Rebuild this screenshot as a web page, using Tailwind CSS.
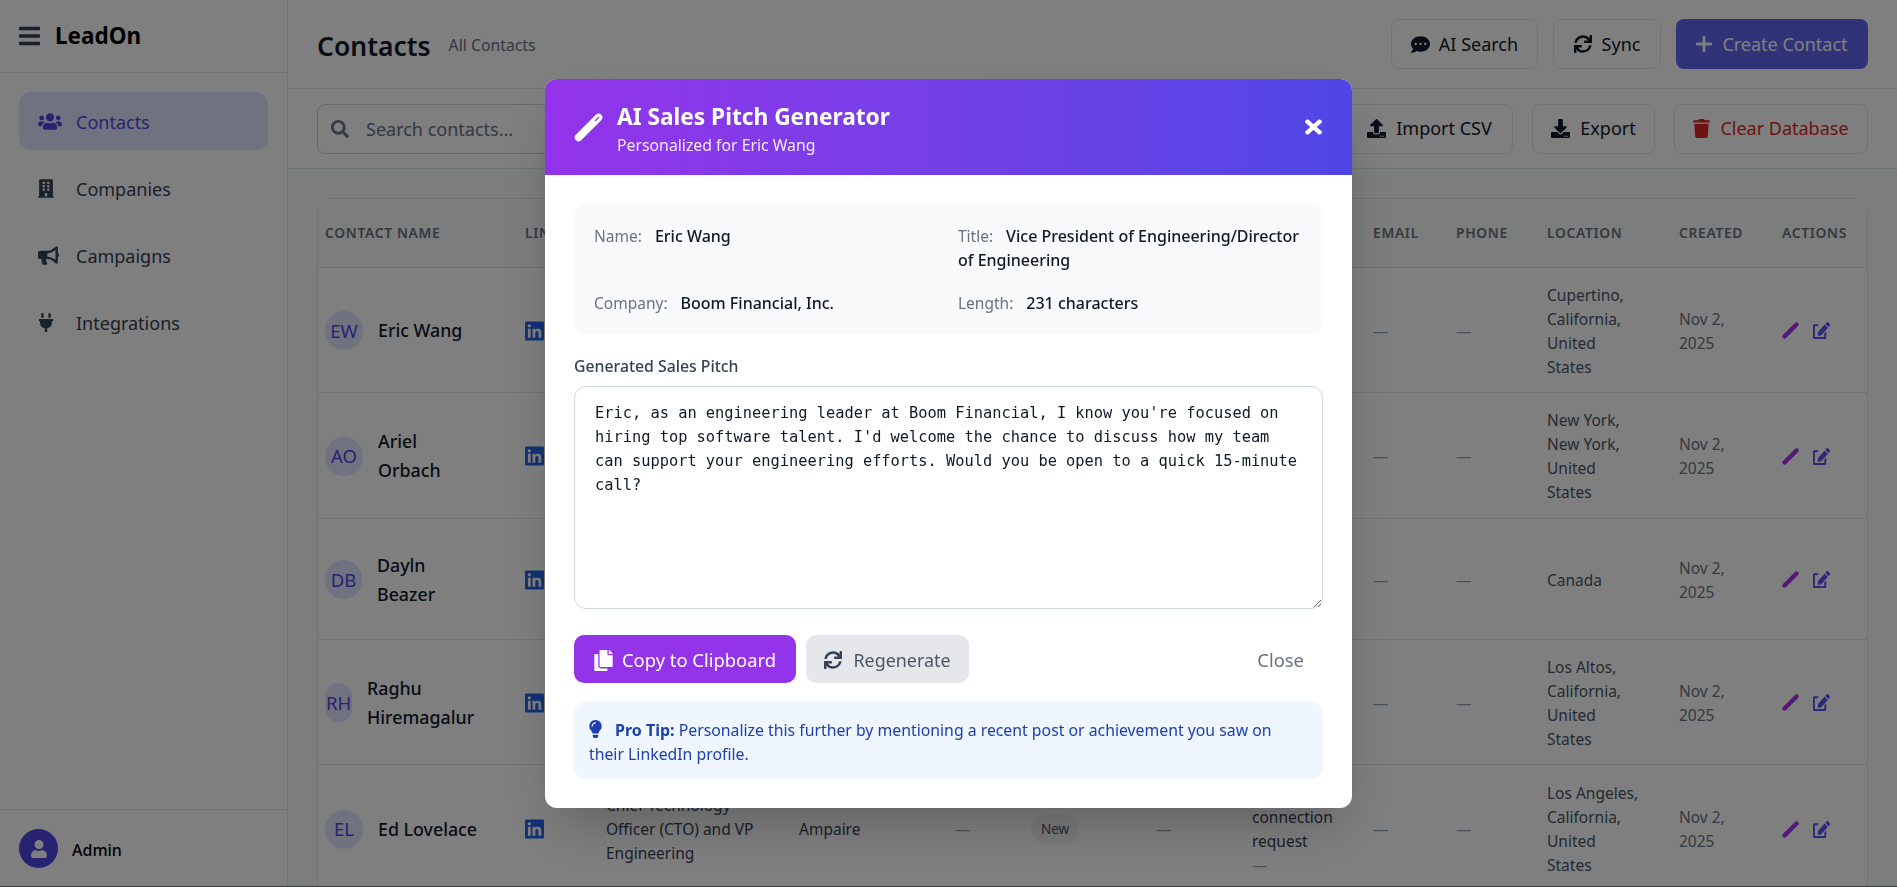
<!doctype html>
<html><head><meta charset="utf-8"><title>LeadOn</title><script src="https://cdn.jsdelivr.net/npm/@tailwindcss/browser@4"></script></head>
<body class="relative h-[887px] overflow-hidden bg-gray-50 font-['Noto_Sans',sans-serif] text-gray-900">
<div class="flex h-[887px]">
  <aside class="flex w-[288px] shrink-0 flex-col border-r border-gray-200 bg-white">
    <div class="flex h-[73px] shrink-0 items-center gap-[15px] border-b border-gray-200 pl-[19px]">
      <svg class="h-[24px] w-[21px] text-gray-700" viewBox="0 0 448 512" fill="currentColor"><path d="M16 132h416c8.837 0 16-7.163 16-16V76c0-8.837-7.163-16-16-16H16C7.163 60 0 67.163 0 76v40c0 8.837 7.163 16 16 16zm0 160h416c8.837 0 16-7.163 16-16v-40c0-8.837-7.163-16-16-16H16c-8.837 0-16 7.163-16 16v40c0 8.837 7.163 16 16 16zm0 160h416c8.837 0 16-7.163 16-16v-40c0-8.837-7.163-16-16-16H16c-8.837 0-16 7.163-16 16v40c0 8.837 7.163 16 16 16z"/></svg>
      <span class="text-[22.5px] font-bold leading-none text-black">LeadOn</span>
    </div>
    <nav class="flex flex-1 flex-col gap-[9px] px-[19px] pt-[19px] text-[18px]">
      <a class="flex h-[58px] items-center rounded-xl bg-[#e0e7ff] pl-[19px] text-[#4f46e5]">
        <span class="flex w-[39px] items-center"><svg class="h-[19px] w-[24px]" viewBox="0 0 640 512" fill="currentColor"><path d="M96 224c35.3 0 64-28.7 64-64s-28.7-64-64-64-64 28.7-64 64 28.7 64 64 64zm448 0c35.3 0 64-28.7 64-64s-28.7-64-64-64-64 28.7-64 64 28.7 64 64 64zm32 32h-64c-17.6 0-33.5 7.1-45.1 18.6 40.3 22.1 68.9 62 75.1 109.4h66c17.7 0 32-14.3 32-32v-32c0-35.3-28.7-64-64-64zm-256 0c61.9 0 112-50.1 112-112S381.9 32 320 32 208 82.1 208 144s50.1 112 112 112zm76.8 32h-8.3c-20.8 10-43.9 16-68.5 16s-47.6-6-68.5-16h-8.3C179.6 288 128 339.6 128 403.2V432c0 26.5 21.5 48 48 48h288c26.5 0 48-21.5 48-48v-28.8c0-63.6-51.6-115.2-115.2-115.2zm-223.7-13.4C161.5 263.1 145.6 256 128 256H64c-35.3 0-64 28.7-64 64v32c0 17.7 14.3 32 32 32h65.9c6.3-47.4 34.9-87.3 75.2-109.4z"/></svg></span><span class="ml-[-1px] pt-[2px]">Contacts</span></a>
      <a class="flex h-[58px] items-center rounded-xl pl-[19px] text-gray-700">
        <span class="flex w-[39px] items-center"><svg class="h-[19px] w-[16px]" viewBox="0 0 448 512" fill="currentColor"><path d="M436 480h-20V24c0-13.255-10.745-24-24-24H56C42.745 0 32 10.745 32 24v456H12c-6.627 0-12 5.373-12 12v20h448v-20c0-6.627-5.373-12-12-12zM128 76c0-6.627 5.373-12 12-12h40c6.627 0 12 5.373 12 12v40c0 6.627-5.373 12-12 12h-40c-6.627 0-12-5.373-12-12V76zm0 96c0-6.627 5.373-12 12-12h40c6.627 0 12 5.373 12 12v40c0 6.627-5.373 12-12 12h-40c-6.627 0-12-5.373-12-12v-40zm52 148h-40c-6.627 0-12-5.373-12-12v-40c0-6.627 5.373-12 12-12h40c6.627 0 12 5.373 12 12v40c0 6.627-5.373 12-12 12zm76 160h-64v-84c0-6.627 5.373-12 12-12h40c6.627 0 12 5.373 12 12v84zm64-172c0 6.627-5.373 12-12 12h-40c-6.627 0-12-5.373-12-12v-40c0-6.627 5.373-12 12-12h40c6.627 0 12 5.373 12 12v40zm0-96c0 6.627-5.373 12-12 12h-40c-6.627 0-12-5.373-12-12v-40c0-6.627 5.373-12 12-12h40c6.627 0 12 5.373 12 12v40zm0-96c0 6.627-5.373 12-12 12h-40c-6.627 0-12-5.373-12-12V76c0-6.627 5.373-12 12-12h40c6.627 0 12 5.373 12 12v40z"/></svg></span><span class="ml-[-1px] pt-[2px]">Companies</span></a>
      <a class="flex h-[58px] items-center rounded-xl pl-[19px] text-gray-700">
        <span class="flex w-[39px] items-center"><svg class="h-[19px] w-[21px]" viewBox="0 0 576 512" fill="currentColor"><path d="M576 240c0-23.63-12.95-44.04-32-55.12V32.01C544 23.26 537.02 0 512 0c-7.12 0-14.19 2.38-19.98 7.02l-85.03 68.03C364.28 109.19 310.66 128 256 128H64c-35.35 0-64 28.65-64 64v96c0 35.35 28.65 64 64 64h33.7c-1.39 10.48-2.18 21.14-2.18 32 0 39.77 9.26 77.35 25.56 110.94 5.19 10.69 16.52 17.06 28.4 17.06h74.28c26.05 0 41.69-29.84 25.9-50.56-16.4-21.52-26.15-48.36-26.15-77.44 0-11.11 1.62-21.79 4.41-32H256c54.66 0 108.28 18.81 150.98 52.95l85.03 68.03a32.023 32.023 0 0 0 19.98 7.02c24.92 0 32-22.78 32-32V295.13C563.05 284.04 576 263.63 576 240zm-96 141.42l-33.05-26.44C392.95 311.78 325.12 288 256 288v-96c69.12 0 136.95-23.78 190.95-66.98L480 98.58v282.84z"/></svg></span><span class="ml-[-1px] pt-[2px]">Campaigns</span></a>
      <a class="flex h-[58px] items-center rounded-xl pl-[19px] text-gray-700">
        <span class="flex w-[39px] items-center"><svg class="h-[19px] w-[16px]" viewBox="0 0 384 512" fill="currentColor"><path d="M320,32a32,32,0,0,0-64,0v96h64Zm48,128H16A16,16,0,0,0,0,176v32a16,16,0,0,0,16,16H32v32A160.07,160.07,0,0,0,160,412.8V512h64V412.8A160.07,160.07,0,0,0,352,256V224h16a16,16,0,0,0,16-16V176A16,16,0,0,0,368,160ZM128,32a32,32,0,0,0-64,0v96h64Z"/></svg></span><span class="ml-[-1px] pt-[2px]">Integrations</span></a>
    </nav>
    <div class="flex h-[78px] shrink-0 items-center gap-[14px] border-t border-gray-200 pl-[19px]">
      <div class="flex h-[39px] w-[39px] items-center justify-center rounded-full bg-[#4f46e5] text-white"><svg class="h-[18px] w-[16px]" viewBox="0 0 448 512" fill="currentColor"><path d="M224 256c70.7 0 128-57.3 128-128S294.7 0 224 0 96 57.3 96 128s57.3 128 128 128zm89.6 32h-16.7c-22.2 10.2-46.9 16-72.9 16s-50.6-5.8-72.9-16h-16.7C60.2 288 0 348.2 0 422.4V464c0 26.5 21.5 48 48 48h352c26.5 0 48-21.5 48-48v-41.6c0-74.2-60.2-134.4-134.4-134.4z"/></svg></div>
      <span class="pt-[2px] text-[16px] font-medium text-black">Admin</span>
    </div>
  </aside>

  <main class="flex min-w-0 flex-1 flex-col overflow-hidden">
    <header class="flex h-[89px] shrink-0 items-center border-b border-gray-200 bg-white px-[29px]">
      <h1 class="pt-[4px] text-[26.5px] font-semibold leading-none">Contacts</h1>
      <span class="ml-[18px] pt-[4px] text-[15.8px] text-gray-500">All Contacts</span>
      <div class="ml-auto flex gap-[15px] text-[18px]">
        <button class="flex h-[50px] w-[147px] items-center justify-center gap-[9px] rounded-lg border border-gray-200 text-gray-900"><svg class="h-[19px] w-[19px]" viewBox="0 0 512 512" fill="currentColor"><path d="M256 32C114.6 32 0 125.1 0 240c0 49.6 21.4 95 57 130.7C44.5 421.1 2.7 466 2.2 466.5c-2.2 2.3-2.8 5.7-1.5 8.7S4.8 480 8 480c66.3 0 116-31.8 140.6-51.4 32.7 12.3 69 19.4 107.4 19.4 141.4 0 256-93.1 256-208S397.4 32 256 32zM128 272c-17.7 0-32-14.3-32-32s14.3-32 32-32 32 14.3 32 32-14.3 32-32 32zm128 0c-17.7 0-32-14.3-32-32s14.3-32 32-32 32 14.3 32 32-14.3 32-32 32zm128 0c-17.7 0-32-14.3-32-32s14.3-32 32-32 32 14.3 32 32-14.3 32-32 32z"/></svg>AI Search</button>
        <button class="flex h-[50px] w-[108px] items-center justify-center gap-[10px] rounded-lg border border-gray-200 text-gray-900"><svg class="h-[18px] w-[18px]" viewBox="0 0 512 512" fill="currentColor"><path d="M440.65 12.57l4 82.77A247.16 247.16 0 0 0 255.83 8C134.73 8 33.91 94.92 12.29 209.82A12 12 0 0 0 24.09 224h49.05a12 12 0 0 0 11.67-9.26 175.91 175.91 0 0 1 317-56.94l-101.46-4.86a12 12 0 0 0-12.57 12v47.41a12 12 0 0 0 12 12H500a12 12 0 0 0 12-12V12a12 12 0 0 0-12-12h-47.37a12 12 0 0 0-11.98 12.57zM255.83 432a175.61 175.61 0 0 1-146-77.8l101.8 4.87a12 12 0 0 0 12.57-12v-47.4a12 12 0 0 0-12-12H12a12 12 0 0 0-12 12V500a12 12 0 0 0 12 12h47.35a12 12 0 0 0 12-12.6l-4.15-82.57A247.17 247.17 0 0 0 255.83 504c121.11 0 221.93-86.92 243.55-201.82a12 12 0 0 0-11.8-14.18h-49.05a12 12 0 0 0-11.67 9.26A175.86 175.86 0 0 1 255.83 432z"/></svg>Sync</button>
        <button class="flex h-[50px] w-[192px] items-center justify-center gap-[10px] rounded-lg bg-[#6366f1] text-white"><svg class="h-[16px] w-[16px]" viewBox="0 0 16 16" fill="currentColor"><rect x="6.6" y="0" width="2.8" height="16" rx="1"/><rect x="0" y="6.6" width="16" height="2.8" rx="1"/></svg>Create Contact</button>
      </div>
    </header>
    <div class="flex h-[80px] shrink-0 items-center border-b border-gray-200 bg-white px-[29px]">
      <div class="relative w-[420px]">
        <svg class="absolute left-[14px] top-[16px] h-[18px] w-[18px] text-gray-500" viewBox="0 0 512 512" fill="currentColor"><path d="M505 442.7L405.3 343c-4.5-4.5-10.6-7-17-7H372c27.6-35.3 44-79.7 44-128C416 93.1 322.9 0 208 0S0 93.1 0 208s93.1 208 208 208c48.3 0 92.7-16.4 128-44v16.3c0 6.4 2.5 12.5 7 17l99.7 99.7c9.4 9.4 24.6 9.4 33.9 0l28.3-28.3c9.4-9.4 9.4-24.6.1-34zM208 336c-70.7 0-128-57.2-128-128 0-70.7 57.2-128 128-128 70.7 0 128 57.2 128 128 0 70.7-57.2 128-128 128z"/></svg>
        <input class="h-[50px] w-full rounded-lg border border-gray-300 pl-[48px] text-[18px] placeholder:text-gray-500" placeholder="Search contacts...">
      </div>
      <div class="ml-auto flex gap-[19px] text-[18px]">
        <button class="flex h-[50px] w-[167px] items-center justify-center gap-[10px] rounded-lg border border-gray-200 text-gray-900"><svg class="h-[19px] w-[19px]" viewBox="0 0 512 512" fill="currentColor"><path d="M296 384h-80c-13.3 0-24-10.7-24-24V192h-87.7c-17.8 0-26.7-21.5-14.1-34.1L242.3 5.7c7.5-7.5 19.8-7.5 27.3 0l152.2 152.2c12.6 12.6 3.7 34.1-14.1 34.1H320v168c0 13.3-10.7 24-24 24zm216-8v112c0 13.3-10.7 24-24 24H24c-13.3 0-24-10.7-24-24V376c0-13.3 10.7-24 24-24h136v8c0 30.9 25.1 56 56 56h80c30.9 0 56-25.1 56-56v-8h136c13.3 0 24 10.7 24 24zm-124 88c0-11-9-20-20-20s-20 9-20 20 9 20 20 20 20-9 20-20zm64 0c0-11-9-20-20-20s-20 9-20 20 9 20 20 20 20-9 20-20z"/></svg>Import CSV</button>
        <button class="flex h-[50px] w-[123px] items-center justify-center gap-[10px] rounded-lg border border-gray-200 text-gray-900"><svg class="h-[19px] w-[19px]" viewBox="0 0 512 512" fill="currentColor"><path d="M216 0h80c13.3 0 24 10.7 24 24v168h87.7c17.8 0 26.7 21.5 14.1 34.1L269.7 378.3c-7.5 7.5-19.8 7.5-27.3 0L90.1 226.1c-12.6-12.6-3.7-34.1 14.1-34.1H192V24c0-13.3 10.7-24 24-24zm296 376v112c0 13.3-10.7 24-24 24H24c-13.3 0-24-10.7-24-24V376c0-13.3 10.7-24 24-24h146.7l49 49c20.1 20.1 52.5 20.1 72.6 0l49-49H488c13.3 0 24 10.7 24 24zm-124 88c0-11-9-20-20-20s-20 9-20 20 9 20 20 20 20-9 20-20zm64 0c0-11-9-20-20-20s-20 9-20 20 9 20 20 20 20-9 20-20z"/></svg>Export</button>
        <button class="flex h-[50px] w-[194px] items-center justify-center gap-[10px] rounded-lg border border-gray-200 text-[#dc2626]"><svg class="h-[19px] w-[17px]" viewBox="0 0 448 512" fill="currentColor"><path d="M432 32H312l-9.4-18.7A24 24 0 0 0 281.1 0H166.8a23.72 23.72 0 0 0-21.4 13.3L136 32H16A16 16 0 0 0 0 48v32a16 16 0 0 0 16 16h416a16 16 0 0 0 16-16V48a16 16 0 0 0-16-16zM53.2 467a48 48 0 0 0 47.9 45h245.8a48 48 0 0 0 47.9-45L416 128H32z"/></svg>Clear Database</button>
      </div>
    </div>
    <div class="px-[29px] pt-[29px]">
      <div class="rounded-xl border border-gray-200 bg-white">
        <table class="w-full table-fixed border-collapse text-left text-[15.5px] leading-[24px] text-gray-600 [&_td]:pt-[2px]">
          <colgroup><col class="w-[199px]"><col class="w-[81px]"><col class="w-[193px]"><col class="w-[156px]"><col class="w-[76px]"><col class="w-[125px]"><col class="w-[96px]"><col class="w-[121px]"><col class="w-[83px]"><col class="w-[91px]"><col class="w-[132px]"><col class="w-[103px]"><col class="w-[93px]"></colgroup>
          <thead class="bg-gray-50 text-[13.8px] uppercase tracking-[0.05em] text-gray-500">
            <tr class="h-[68px] border-b border-gray-200">
              <th class="pl-[7px] font-semibold">Contact Name</th><th class="pl-2 font-semibold">LinkedIn</th><th></th><th></th><th></th><th></th><th></th><th></th>
              <th class="pl-2 font-semibold">Email</th><th class="pl-2 font-semibold">Phone</th><th class="pl-2 font-semibold">Location</th><th class="pl-2 font-semibold">Created</th><th class="pl-2 font-semibold">Actions</th>
            </tr>
          </thead>
          <tbody>
            <tr class="h-[125px] border-b border-gray-200">
              <td class="pl-[7px]"><div class="flex items-center gap-[15px]"><span class="flex h-[39px] w-[38px] shrink-0 items-center justify-center rounded-full bg-[#e0e7ff] text-[18.5px] text-[#4f46e5]">EW</span><span class="text-[17.8px] font-medium leading-[29px] text-gray-900">Eric Wang</span></div></td>
              <td class="pl-2"><svg class="h-[22px] w-[19px] text-[#2563eb]" viewBox="0 0 448 512" fill="currentColor"><path d="M416 32H31.9C14.3 32 0 46.5 0 64.3v383.4C0 465.5 14.3 480 31.9 480H416c17.6 0 32-14.5 32-32.3V64.3c0-17.8-14.4-32.3-32-32.3zM135.4 416H69V202.2h66.5V416zm-33.2-243c-21.3 0-38.5-17.3-38.5-38.5S80.9 96 102.2 96c21.2 0 38.5 17.3 38.5 38.5 0 21.3-17.2 38.5-38.5 38.5zm282.1 243h-66.4V312c0-24.8-.5-56.7-34.5-56.7-34.6 0-39.9 27-39.9 54.9V416h-66.4V202.2h63.7v29.2h.9c8.9-16.8 30.6-27.3 63-27.3 67.2 0 79.7 44.3 79.7 101.9V416z"/></svg></td>
              <td></td><td></td><td></td><td></td><td></td><td></td>
              <td class="pl-2 text-gray-400">—</td><td class="pl-2 text-gray-400">—</td>
              <td class="pl-2">Cupertino,<br>California,<br>United<br>States</td><td class="pl-2 text-gray-500">Nov 2,<br>2025</td>
              <td class="pl-2"><div class="flex gap-[14px]"><svg class="h-[17px] w-[17px] text-[#a833f0]" viewBox="0 0 17 17"><path d="M2.5 14.5 14.5 2.5" stroke="currentColor" stroke-width="4.4" stroke-linecap="round"/></svg><svg class="h-[17px] w-[17px] text-[#5b50f0]" viewBox="0 0 576 512" preserveAspectRatio="none" fill="currentColor"><path d="M402.6 83.2l90.2 90.2c3.8 3.8 3.8 10 0 13.8L274.4 405.6l-92.8 10.3c-12.4 1.4-22.9-9.1-21.5-21.5l10.3-92.8L388.8 83.2c3.8-3.8 10-3.8 13.8 0zm162-22.9l-48.8-48.8c-15.2-15.2-39.9-15.2-55.2 0l-35.4 35.4c-3.8 3.8-3.8 10 0 13.8l90.2 90.2c3.8 3.8 10 3.8 13.8 0l35.4-35.4c15.2-15.3 15.2-40 0-55.2zM384 346.2V448H64V128h73.1c3.2 0 6.2-1.3 8.5-3.5l40-40c7.6-7.6 2.2-20.5-8.5-20.5H48C21.5 64 0 85.5 0 112v352c0 26.5 21.5 48 48 48h352c26.5 0 48-21.5 48-48V306.2c0-10.7-12.9-16-20.5-8.5l-40 40c-2.2 2.3-3.5 5.3-3.5 8.5z"/></svg></div></td>
            </tr>
            <tr class="h-[126px] border-b border-gray-200">
              <td class="pl-[7px]"><div class="flex items-center gap-[15px]"><span class="flex h-[39px] w-[38px] shrink-0 items-center justify-center rounded-full bg-[#e0e7ff] text-[18.5px] text-[#4f46e5]">AO</span><span class="text-[17.8px] font-medium leading-[29px] text-gray-900">Ariel<br>Orbach</span></div></td>
              <td class="pl-2"><svg class="h-[22px] w-[19px] text-[#2563eb]" viewBox="0 0 448 512" fill="currentColor"><path d="M416 32H31.9C14.3 32 0 46.5 0 64.3v383.4C0 465.5 14.3 480 31.9 480H416c17.6 0 32-14.5 32-32.3V64.3c0-17.8-14.4-32.3-32-32.3zM135.4 416H69V202.2h66.5V416zm-33.2-243c-21.3 0-38.5-17.3-38.5-38.5S80.9 96 102.2 96c21.2 0 38.5 17.3 38.5 38.5 0 21.3-17.2 38.5-38.5 38.5zm282.1 243h-66.4V312c0-24.8-.5-56.7-34.5-56.7-34.6 0-39.9 27-39.9 54.9V416h-66.4V202.2h63.7v29.2h.9c8.9-16.8 30.6-27.3 63-27.3 67.2 0 79.7 44.3 79.7 101.9V416z"/></svg></td>
              <td></td><td></td><td></td><td></td><td></td><td></td>
              <td class="pl-2 text-gray-400">—</td><td class="pl-2 text-gray-400">—</td>
              <td class="pl-2">New York,<br>New York,<br>United<br>States</td><td class="pl-2 text-gray-500">Nov 2,<br>2025</td>
              <td class="pl-2"><div class="flex gap-[14px]"><svg class="h-[17px] w-[17px] text-[#a833f0]" viewBox="0 0 17 17"><path d="M2.5 14.5 14.5 2.5" stroke="currentColor" stroke-width="4.4" stroke-linecap="round"/></svg><svg class="h-[17px] w-[17px] text-[#5b50f0]" viewBox="0 0 576 512" preserveAspectRatio="none" fill="currentColor"><path d="M402.6 83.2l90.2 90.2c3.8 3.8 3.8 10 0 13.8L274.4 405.6l-92.8 10.3c-12.4 1.4-22.9-9.1-21.5-21.5l10.3-92.8L388.8 83.2c3.8-3.8 10-3.8 13.8 0zm162-22.9l-48.8-48.8c-15.2-15.2-39.9-15.2-55.2 0l-35.4 35.4c-3.8 3.8-3.8 10 0 13.8l90.2 90.2c3.8 3.8 10 3.8 13.8 0l35.4-35.4c15.2-15.3 15.2-40 0-55.2zM384 346.2V448H64V128h73.1c3.2 0 6.2-1.3 8.5-3.5l40-40c7.6-7.6 2.2-20.5-8.5-20.5H48C21.5 64 0 85.5 0 112v352c0 26.5 21.5 48 48 48h352c26.5 0 48-21.5 48-48V306.2c0-10.7-12.9-16-20.5-8.5l-40 40c-2.2 2.3-3.5 5.3-3.5 8.5z"/></svg></div></td>
            </tr>
            <tr class="h-[121px] border-b border-gray-200">
              <td class="pl-[7px]"><div class="flex items-center gap-[15px]"><span class="flex h-[39px] w-[37px] shrink-0 items-center justify-center rounded-full bg-[#e0e7ff] text-[18.5px] text-[#4f46e5]">DB</span><span class="text-[17.8px] font-medium leading-[29px] text-gray-900">Dayln<br>Beazer</span></div></td>
              <td class="pl-2"><svg class="h-[22px] w-[19px] text-[#2563eb]" viewBox="0 0 448 512" fill="currentColor"><path d="M416 32H31.9C14.3 32 0 46.5 0 64.3v383.4C0 465.5 14.3 480 31.9 480H416c17.6 0 32-14.5 32-32.3V64.3c0-17.8-14.4-32.3-32-32.3zM135.4 416H69V202.2h66.5V416zm-33.2-243c-21.3 0-38.5-17.3-38.5-38.5S80.9 96 102.2 96c21.2 0 38.5 17.3 38.5 38.5 0 21.3-17.2 38.5-38.5 38.5zm282.1 243h-66.4V312c0-24.8-.5-56.7-34.5-56.7-34.6 0-39.9 27-39.9 54.9V416h-66.4V202.2h63.7v29.2h.9c8.9-16.8 30.6-27.3 63-27.3 67.2 0 79.7 44.3 79.7 101.9V416z"/></svg></td>
              <td></td><td></td><td></td><td></td><td></td><td></td>
              <td class="pl-2 text-gray-400">—</td><td class="pl-2 text-gray-400">—</td>
              <td class="pl-2">Canada</td><td class="pl-2 text-gray-500">Nov 2,<br>2025</td>
              <td class="pl-2"><div class="flex gap-[14px]"><svg class="h-[17px] w-[17px] text-[#a833f0]" viewBox="0 0 17 17"><path d="M2.5 14.5 14.5 2.5" stroke="currentColor" stroke-width="4.4" stroke-linecap="round"/></svg><svg class="h-[17px] w-[17px] text-[#5b50f0]" viewBox="0 0 576 512" preserveAspectRatio="none" fill="currentColor"><path d="M402.6 83.2l90.2 90.2c3.8 3.8 3.8 10 0 13.8L274.4 405.6l-92.8 10.3c-12.4 1.4-22.9-9.1-21.5-21.5l10.3-92.8L388.8 83.2c3.8-3.8 10-3.8 13.8 0zm162-22.9l-48.8-48.8c-15.2-15.2-39.9-15.2-55.2 0l-35.4 35.4c-3.8 3.8-3.8 10 0 13.8l90.2 90.2c3.8 3.8 10 3.8 13.8 0l35.4-35.4c15.2-15.3 15.2-40 0-55.2zM384 346.2V448H64V128h73.1c3.2 0 6.2-1.3 8.5-3.5l40-40c7.6-7.6 2.2-20.5-8.5-20.5H48C21.5 64 0 85.5 0 112v352c0 26.5 21.5 48 48 48h352c26.5 0 48-21.5 48-48V306.2c0-10.7-12.9-16-20.5-8.5l-40 40c-2.2 2.3-3.5 5.3-3.5 8.5z"/></svg></div></td>
            </tr>
            <tr class="h-[125px] border-b border-gray-200">
              <td class="pl-[7px]"><div class="flex items-center gap-[15px]"><span class="flex h-[39px] w-[27px] shrink-0 items-center justify-center rounded-full bg-[#e0e7ff] text-[18.5px] text-[#4f46e5]">RH</span><span class="text-[17.8px] font-medium leading-[29px] text-gray-900">Raghu<br>Hiremagalur</span></div></td>
              <td class="pl-2"><svg class="h-[22px] w-[19px] text-[#2563eb]" viewBox="0 0 448 512" fill="currentColor"><path d="M416 32H31.9C14.3 32 0 46.5 0 64.3v383.4C0 465.5 14.3 480 31.9 480H416c17.6 0 32-14.5 32-32.3V64.3c0-17.8-14.4-32.3-32-32.3zM135.4 416H69V202.2h66.5V416zm-33.2-243c-21.3 0-38.5-17.3-38.5-38.5S80.9 96 102.2 96c21.2 0 38.5 17.3 38.5 38.5 0 21.3-17.2 38.5-38.5 38.5zm282.1 243h-66.4V312c0-24.8-.5-56.7-34.5-56.7-34.6 0-39.9 27-39.9 54.9V416h-66.4V202.2h63.7v29.2h.9c8.9-16.8 30.6-27.3 63-27.3 67.2 0 79.7 44.3 79.7 101.9V416z"/></svg></td>
              <td></td><td></td><td></td><td></td><td></td><td></td>
              <td class="pl-2 text-gray-400">—</td><td class="pl-2 text-gray-400">—</td>
              <td class="pl-2">Los Altos,<br>California,<br>United<br>States</td><td class="pl-2 text-gray-500">Nov 2,<br>2025</td>
              <td class="pl-2"><div class="flex gap-[14px]"><svg class="h-[17px] w-[17px] text-[#a833f0]" viewBox="0 0 17 17"><path d="M2.5 14.5 14.5 2.5" stroke="currentColor" stroke-width="4.4" stroke-linecap="round"/></svg><svg class="h-[17px] w-[17px] text-[#5b50f0]" viewBox="0 0 576 512" preserveAspectRatio="none" fill="currentColor"><path d="M402.6 83.2l90.2 90.2c3.8 3.8 3.8 10 0 13.8L274.4 405.6l-92.8 10.3c-12.4 1.4-22.9-9.1-21.5-21.5l10.3-92.8L388.8 83.2c3.8-3.8 10-3.8 13.8 0zm162-22.9l-48.8-48.8c-15.2-15.2-39.9-15.2-55.2 0l-35.4 35.4c-3.8 3.8-3.8 10 0 13.8l90.2 90.2c3.8 3.8 10 3.8 13.8 0l35.4-35.4c15.2-15.3 15.2-40 0-55.2zM384 346.2V448H64V128h73.1c3.2 0 6.2-1.3 8.5-3.5l40-40c7.6-7.6 2.2-20.5-8.5-20.5H48C21.5 64 0 85.5 0 112v352c0 26.5 21.5 48 48 48h352c26.5 0 48-21.5 48-48V306.2c0-10.7-12.9-16-20.5-8.5l-40 40c-2.2 2.3-3.5 5.3-3.5 8.5z"/></svg></div></td>
            </tr>
            <tr class="h-[128px]">
              <td class="pl-[7px]"><div class="flex items-center gap-[15px]"><span class="flex h-[39px] w-[38px] shrink-0 items-center justify-center rounded-full bg-[#e0e7ff] text-[18.5px] text-[#4f46e5]">EL</span><span class="text-[17.8px] font-medium leading-[29px] text-gray-900">Ed Lovelace</span></div></td>
              <td class="pl-2"><svg class="h-[22px] w-[19px] text-[#2563eb]" viewBox="0 0 448 512" fill="currentColor"><path d="M416 32H31.9C14.3 32 0 46.5 0 64.3v383.4C0 465.5 14.3 480 31.9 480H416c17.6 0 32-14.5 32-32.3V64.3c0-17.8-14.4-32.3-32-32.3zM135.4 416H69V202.2h66.5V416zm-33.2-243c-21.3 0-38.5-17.3-38.5-38.5S80.9 96 102.2 96c21.2 0 38.5 17.3 38.5 38.5 0 21.3-17.2 38.5-38.5 38.5zm282.1 243h-66.4V312c0-24.8-.5-56.7-34.5-56.7-34.6 0-39.9 27-39.9 54.9V416h-66.4V202.2h63.7v29.2h.9c8.9-16.8 30.6-27.3 63-27.3 67.2 0 79.7 44.3 79.7 101.9V416z"/></svg></td>
              <td class="pl-2 text-gray-700">Chief Technology<br>Officer (CTO) and VP<br>Engineering</td>
              <td class="pl-2 text-gray-700">Ampaire</td>
              <td class="pl-2 text-gray-400">—</td>
              <td class="pl-2"><span class="inline-flex h-[30px] w-[48px] items-center justify-center rounded-full bg-gray-100 text-[13.5px] text-gray-600">New</span></td>
              <td class="pl-2 text-gray-400">—</td>
              <td class="pl-2 text-gray-700">Sent<br>connection<br>request<br><span class="text-gray-400">—</span></td>
              <td class="pl-2 text-gray-400">—</td><td class="pl-2 text-gray-400">—</td>
              <td class="pl-2">Los Angeles,<br>California,<br>United<br>States</td><td class="pl-2 text-gray-500">Nov 2,<br>2025</td>
              <td class="pl-2"><div class="flex gap-[14px]"><svg class="h-[17px] w-[17px] text-[#a833f0]" viewBox="0 0 17 17"><path d="M2.5 14.5 14.5 2.5" stroke="currentColor" stroke-width="4.4" stroke-linecap="round"/></svg><svg class="h-[17px] w-[17px] text-[#5b50f0]" viewBox="0 0 576 512" preserveAspectRatio="none" fill="currentColor"><path d="M402.6 83.2l90.2 90.2c3.8 3.8 3.8 10 0 13.8L274.4 405.6l-92.8 10.3c-12.4 1.4-22.9-9.1-21.5-21.5l10.3-92.8L388.8 83.2c3.8-3.8 10-3.8 13.8 0zm162-22.9l-48.8-48.8c-15.2-15.2-39.9-15.2-55.2 0l-35.4 35.4c-3.8 3.8-3.8 10 0 13.8l90.2 90.2c3.8 3.8 10 3.8 13.8 0l35.4-35.4c15.2-15.3 15.2-40 0-55.2zM384 346.2V448H64V128h73.1c3.2 0 6.2-1.3 8.5-3.5l40-40c7.6-7.6 2.2-20.5-8.5-20.5H48C21.5 64 0 85.5 0 112v352c0 26.5 21.5 48 48 48h352c26.5 0 48-21.5 48-48V306.2c0-10.7-12.9-16-20.5-8.5l-40 40c-2.2 2.3-3.5 5.3-3.5 8.5z"/></svg></div></td>
            </tr>
          </tbody>
        </table>
      </div>
    </div>
  </main>
</div>

<div class="fixed inset-0 flex items-center justify-center bg-black/50">
  <div class="w-[807px] overflow-hidden rounded-xl bg-white shadow-2xl">
    <div class="flex h-[96px] items-center bg-gradient-to-r from-[#9333ea] to-[#4f46e5] pl-[29px] pr-[30px] text-white">
      <svg class="h-[29px] w-[29px] shrink-0" viewBox="0 0 29 29"><path d="M4.5 24.5 24.5 4.5" stroke="currentColor" stroke-width="7.5" stroke-linecap="round"/><path d="M21 8 25 4" stroke="#8a38e9" stroke-width="1.2"/></svg>
      <div class="ml-[14px] pt-[5px]">
        <h2 class="text-[22.7px] font-bold leading-[30px]">AI Sales Pitch Generator</h2>
        <p class="text-[15.8px] leading-[26px] text-[#f3e8ff]">Personalized for Eric Wang</p>
      </div>
      <svg class="ml-auto h-[22px] w-[17px] shrink-0" viewBox="0 0 352 512" fill="currentColor" preserveAspectRatio="none"><path d="M242.72 256l100.07-100.07c12.28-12.28 12.28-32.19 0-44.48l-22.24-22.24c-12.28-12.28-32.19-12.28-44.48 0L176 189.28 75.93 89.21c-12.28-12.28-32.19-12.28-44.48 0L9.21 111.45c-12.28 12.28-12.28 32.19 0 44.48L109.28 256 9.21 356.07c-12.28 12.28-12.28 32.19 0 44.48l22.24 22.24c12.28 12.28 32.2 12.28 44.48 0L176 322.72l100.07 100.07c12.28 12.28 32.2 12.28 44.48 0l22.24-22.24c12.28-12.28 12.28-32.19 0-44.48L242.72 256z"/></svg>
    </div>
    <div class="p-[29px]">
      <div class="grid grid-cols-[364px_1fr] gap-y-[19px] rounded-xl bg-gray-50 px-[20px] pb-[19px] pt-[20px] text-[15.5px] leading-[24px]">
        <div><span class="mr-[13px] text-gray-500">Name:</span><span class="text-[16px] font-medium text-gray-900">Eric Wang</span></div>
        <div><span class="mr-[13px] text-gray-500">Title:</span><span class="text-[16px] font-medium text-gray-900">Vice President of Engineering/Director<br>of Engineering</span></div>
        <div><span class="mr-[13px] text-gray-500">Company:</span><span class="text-[16px] font-medium text-gray-900">Boom Financial, Inc.</span></div>
        <div><span class="mr-[13px] text-gray-500">Length:</span><span class="text-[16px] font-medium text-gray-900">231 characters</span></div>
      </div>
      <label class="mt-[20px] block text-[15.8px] font-medium leading-[24px] text-gray-700">Generated Sales Pitch</label>
      <textarea class="mt-[8px] block h-[223px] w-full rounded-xl border border-gray-300 px-[20px] py-[14px] font-['DejaVu_Sans_Mono',monospace] text-[15.35px] leading-[24px] text-gray-900">Eric, as an engineering leader at Boom Financial, I know you're focused on hiring top software talent. I'd welcome the chance to discuss how my team can support your engineering efforts. Would you be open to a quick 15-minute call?</textarea>
      <div class="mt-[26px] flex items-center">
        <button class="flex h-[48px] w-[222px] items-center justify-center gap-[9px] rounded-[10px] bg-[#9333ea] pt-[2px] text-[18.4px] text-white"><svg class="h-[21px] w-[19px]" viewBox="0 0 448 512" fill="currentColor"><path d="M320 448v40c0 13.255-10.745 24-24 24H24c-13.255 0-24-10.745-24-24V120c0-13.255 10.745-24 24-24h72v296c0 30.879 25.121 56 56 56h168zm0-344V0H152c-13.255 0-24 10.745-24 24v368c0 13.255 10.745 24 24 24h272c13.255 0 24-10.745 24-24V128H344c-13.2 0-24-10.8-24-24zm120.971-31.029L375.029 7.029A24 24 0 0 0 358.059 0H352v96h96v-6.059a24 24 0 0 0-7.029-16.97z"/></svg>Copy to Clipboard</button>
        <button class="ml-[10px] flex h-[48px] w-[163px] items-center justify-center gap-[11px] rounded-[10px] bg-gray-200 pt-[2px] text-[17.9px] text-gray-600"><svg class="h-[18px] w-[18px] text-gray-700" viewBox="0 0 512 512" fill="currentColor"><path d="M440.65 12.57l4 82.77A247.16 247.16 0 0 0 255.83 8C134.73 8 33.91 94.92 12.29 209.82A12 12 0 0 0 24.09 224h49.05a12 12 0 0 0 11.67-9.26 175.91 175.91 0 0 1 317-56.94l-101.46-4.86a12 12 0 0 0-12.57 12v47.41a12 12 0 0 0 12 12H500a12 12 0 0 0 12-12V12a12 12 0 0 0-12-12h-47.37a12 12 0 0 0-11.98 12.57zM255.83 432a175.61 175.61 0 0 1-146-77.8l101.8 4.87a12 12 0 0 0 12.57-12v-47.4a12 12 0 0 0-12-12H12a12 12 0 0 0-12 12V500a12 12 0 0 0 12 12h47.35a12 12 0 0 0 12-12.6l-4.15-82.57A247.17 247.17 0 0 0 255.83 504c121.11 0 221.93-86.92 243.55-201.82a12 12 0 0 0-11.8-14.18h-49.05a12 12 0 0 0-11.67 9.26A175.86 175.86 0 0 1 255.83 432z"/></svg>Regenerate</button>
        <button class="ml-auto pr-[19px] pt-[2px] text-[18.4px] text-gray-500">Close</button>
      </div>
      <div class="mt-[19px] rounded-xl bg-[#eff6ff] px-[15px] pb-[13px] pt-[16px] text-[15.8px] leading-[24px] text-[#1e40af]">
        <svg class="mr-[13px] inline-block h-[18px] w-[13px] align-[-2px]" viewBox="0 0 352 512" fill="currentColor"><path d="M96.06 454.35c.01 6.29 1.87 12.45 5.36 17.69l17.09 25.69a31.99 31.99 0 0 0 26.64 14.28h61.71a31.99 31.99 0 0 0 26.64-14.28l17.09-25.69a31.989 31.989 0 0 0 5.36-17.69l.04-38.35H96.01l.05 38.35zM0 176c0 44.37 16.45 84.85 43.56 115.78 16.52 18.85 42.36 58.23 52.21 91.45.04.26.07.52.11.78h160.24c.04-.26.07-.51.11-.78 9.85-33.22 35.69-72.6 52.21-91.45C335.55 260.85 352 220.37 352 176 352 78.61 272.91-.3 175.45 0 73.44.31 0 82.97 0 176zm176-80c-44.11 0-80 35.89-80 80 0 8.84-7.16 16-16 16s-16-7.16-16-16c0-61.76 50.24-112 112-112 8.84 0 16 7.16 16 16s-7.16 16-16 16z"/></svg><strong class="text-[16px] font-bold">Pro Tip:</strong> Personalize this further by mentioning a recent post or achievement you saw on<br>their LinkedIn profile.
      </div>
    </div>
  </div>
</div>
<div class="absolute bottom-0 left-0 h-px w-full bg-[#3d3d3d]"></div>
</body></html>
